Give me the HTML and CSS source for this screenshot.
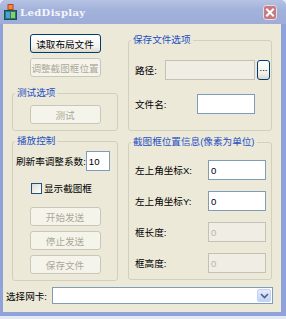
FILE: index.html
```html
<!DOCTYPE html>
<html lang="zh-CN">
<head>
  <meta charset="UTF-8" />
  <title>LedDisplay</title>
  <link rel="stylesheet" href="styles.css">
</head>
<body>
  <div class="window">
    <div class="titlebar">
      <svg class="app-icon" viewBox="0 0 13 16" width="13" height="16">
        <rect x="4" y="0.5" width="5" height="5" fill="#f08a3c" stroke="#c0421e" />
        <rect x="0.5" y="6.5" width="12" height="9" fill="#2f7d54" stroke="#1d4d6e" />
        <rect x="2" y="8" width="4" height="6" fill="#4a9fe0" />
        <rect x="7" y="8" width="4" height="6" fill="#7fd36a" />
      </svg>
      <span class="title">LedDisplay</span>
      <div class="close-btn">
        <svg viewBox="0 0 14 15" width="14" height="15">
          <path d="M4 4.5 L10 10.5 M10 4.5 L4 10.5" stroke="#fff" stroke-width="2" stroke-linecap="square" />
        </svg>
      </div>
    </div>

    <div class="client">
      <div class="columns">
        <div class="col-left">
          <button class="btn">读取布局文件</button>
          <button class="btn btn-second" disabled>调整截图框位置</button>

          <fieldset class="group group-test">
            <legend>测试选项</legend>
            <div class="test-body">
              <button class="btn" disabled>测试</button>
            </div>
          </fieldset>

          <fieldset class="group group-play">
            <legend>播放控制</legend>
            <div class="play-body">
              <div class="rate-row">
                <span>刷新率调整系数:</span>
                <input class="field rate-field" value="10">
              </div>
              <div class="check-row">
                <span class="checkbox"></span>
                <span>显示截图框</span>
              </div>
              <div class="btn-stack">
                <button class="btn" disabled>开始发送</button>
                <button class="btn" disabled>停止发送</button>
                <button class="btn" disabled>保存文件</button>
              </div>
            </div>
          </fieldset>
        </div>

        <div class="col-right">
          <fieldset class="group group-file">
            <legend>保存文件选项</legend>
            <div class="file-body">
              <div class="path-row">
                <span class="path-label">路径:</span>
                <input class="field path-field" disabled>
                <button class="browse-btn">...</button>
              </div>
              <div class="name-row">
                <span>文件名:</span>
                <input class="field name-field">
              </div>
            </div>
          </fieldset>

          <fieldset class="group group-pos">
            <legend>截图框位置信息(像素为单位)</legend>
            <div class="pos-body">
              <span>左上角坐标X:</span>
              <input class="field" value="0">
              <span>左上角坐标Y:</span>
              <input class="field" value="0">
              <span>框长度:</span>
              <input class="field" value="0" disabled>
              <span>框高度:</span>
              <input class="field" value="0" disabled>
            </div>
          </fieldset>
        </div>
      </div>

      <div class="nic-row">
        <span>选择网卡:</span>
        <div class="combo">
          <div class="combo-btn">
            <svg viewBox="0 0 9 6" width="9" height="6">
              <path d="M1 1 L4.5 4.5 L8 1" fill="none" stroke="#4d6185" stroke-width="1.6" />
            </svg>
          </div>
        </div>
      </div>
    </div>
  </div>
</body>
</html>
```

FILE: styles.css
```css
* {
  box-sizing: border-box;
}

body {
  margin: 0;
  background: #e4e8f2;
  font-family: "Liberation Sans", "Noto Sans CJK SC", sans-serif;
  font-size: 9.6px;
  color: #000;
}

.window {
  width: 286px;
  height: 316px;
  display: flex;
  flex-direction: column;
  background: #8fa2d9;
  border-radius: 6px 6px 0 0;
  overflow: hidden;
}

/* title bar (inactive XP look) */
.titlebar {
  height: 24px;
  display: flex;
  align-items: center;
  padding: 0 9px 0 4px;
  background: linear-gradient(#b6c3e4, #a3b2db 40%, #9dadd8);
}

.app-icon {
  flex: none;
}

.title {
  margin-left: 3px;
  font-family: "DejaVu Serif", serif;
  font-weight: bold;
  font-size: 10px;
  letter-spacing: 0.4px;
  color: #f4f6fc;
}

.close-btn {
  margin-left: auto;
  width: 14px;
  height: 15px;
  display: flex;
  background: #c57c80;
  border: 1px solid #eadbe0;
  border-radius: 3px;
}

.close-btn svg {
  margin: -1px;
}

.client {
  flex: 1;
  margin: 0 5px 4px 3px;
  background: #ece9d8;
  padding-top: 10px;
}

.columns {
  display: flex;
  align-items: flex-start;
  gap: 10px;
  padding: 0 9px;
}

.col-left {
  width: 106px;
  display: flex;
  flex-direction: column;
}

.col-right {
  width: 144px;
  display: flex;
  flex-direction: column;
}

/* buttons */
.btn {
  display: block;
  width: 71px;
  height: 19px;
  margin: 0 auto;
  padding: 0;
  font: inherit;
  white-space: nowrap;
  color: #000;
  border: 1px solid #003c74;
  border-radius: 3px;
  background: linear-gradient(#ffffff, #f3f2ed 70%, #dcd8cb);
}

.btn:disabled {
  color: #aca899;
  border-color: #c9c7ba;
  background: #f5f4ea;
}

.btn-second {
  margin-top: 5px;
}

/* group boxes */
.group {
  margin: 0;
  padding: 0;
  min-width: 0;
  border: 1px solid #d0d0bf;
  border-radius: 3px;
}

.group legend {
  margin-left: 2px;
  padding: 0 2px;
  line-height: 12px;
  white-space: nowrap;
  color: #1d4fc4;
}

.group-test {
  margin-top: 10px;
}

.test-body {
  padding: 6px 0 6px;
}

.group-play {
  margin-top: 4px;
}

.play-body {
  padding: 4px 0 6px;
}

.rate-row {
  height: 20px;
  display: flex;
  align-items: center;
  padding-left: 3px;
  white-space: nowrap;
}

.field {
  height: 20px;
  margin: 0;
  padding: 0 2px;
  font: inherit;
  color: #000;
  background: #fff;
  border: 1px solid #7f9db9;
  border-radius: 0;
  outline: none;
}

.field:disabled {
  color: #b8b6a8;
  background: #efede4;
  border-color: #c4c2b6;
}

.rate-field {
  width: 24px;
}

.check-row {
  height: 14px;
  margin-top: 10px;
  padding-left: 18px;
  display: flex;
  align-items: center;
  gap: 2px;
}

.checkbox {
  width: 11px;
  height: 11px;
  border: 1px solid #1c5180;
  background: linear-gradient(135deg, #dcdcd5, #fff);
}

.btn-stack {
  margin-top: 12px;
  display: flex;
  flex-direction: column;
  gap: 5px;
}

/* right side */
.file-body {
  padding: 14px 1px 16px 6px;
}

.path-row {
  height: 20px;
  display: flex;
  align-items: center;
}

.path-label {
  width: 30px;
}

.path-field {
  flex: 1;
  min-width: 0;
}

.browse-btn {
  width: 13px;
  height: 20px;
  margin-left: 2px;
  padding: 0 0 4px;
  font: inherit;
  line-height: 1;
  color: #000;
  border: 1px solid #003c74;
  border-radius: 3px;
  background: linear-gradient(#ffffff, #f0efe9 70%, #dcd8cb);
}

.name-row {
  height: 20px;
  margin-top: 14px;
  display: flex;
  align-items: center;
  justify-content: space-between;
}

.name-field {
  width: 58px;
  margin-right: 15px;
}

.group-pos {
  margin-top: 5px;
}

.pos-body {
  padding: 12px 5px 6px 6px;
  display: grid;
  grid-template-columns: 1fr 58px;
  grid-auto-rows: 20px;
  row-gap: 11px;
  align-items: center;
}

.pos-body .field {
  width: 58px;
}

/* network card picker */
.nic-row {
  height: 17px;
  margin-top: 6px;
  padding: 0 8px 0 3px;
  display: flex;
  align-items: center;
  gap: 5px;
}

.combo {
  flex: 1;
  height: 17px;
  display: flex;
  justify-content: flex-end;
  padding: 1px;
  background: #fff;
  border: 1px solid #7f9db9;
}

.combo-btn {
  width: 14px;
  display: flex;
  align-items: center;
  justify-content: center;
  background: linear-gradient(#e3eafd, #c3d3f7);
  border: 1px solid #c2d2f6;
  border-radius: 2px;
}
```
